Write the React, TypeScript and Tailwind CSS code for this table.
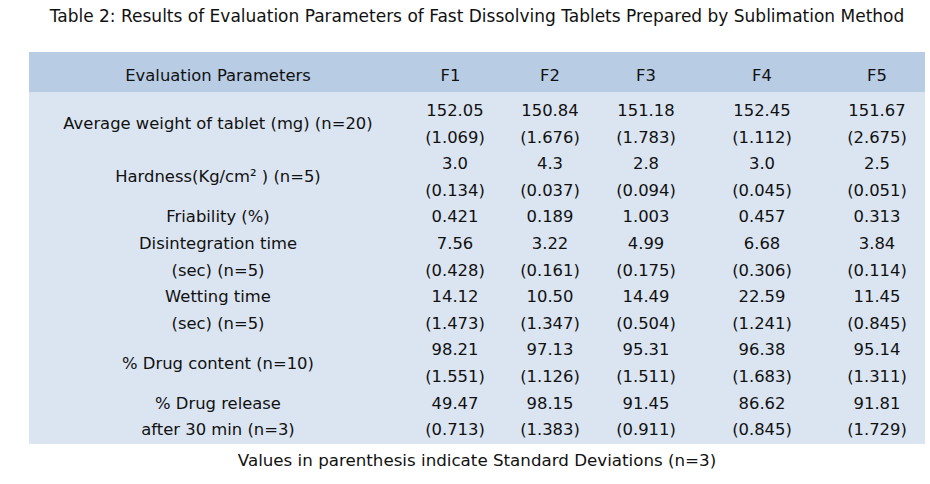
import React from "react";

type Row = { label: string[]; values: string[][] };

const cols = ["F1", "F2", "F3", "F4", "F5"];

const rows: Row[] = [
  {
    label: ["Average weight of tablet (mg) (n=20)"],
    values: [
      ["152.05", "(1.069)"],
      ["150.84", "(1.676)"],
      ["151.18", "(1.783)"],
      ["152.45", "(1.112)"],
      ["151.67", "(2.675)"],
    ],
  },
  {
    label: ["Hardness(Kg/cm\u00b2 ) (n=5)"],
    values: [
      ["3.0", "(0.134)"],
      ["4.3", "(0.037)"],
      ["2.8", "(0.094)"],
      ["3.0", "(0.045)"],
      ["2.5", "(0.051)"],
    ],
  },
  {
    label: ["Friability (%)"],
    values: [["0.421"], ["0.189"], ["1.003"], ["0.457"], ["0.313"]],
  },
  {
    label: ["Disintegration time", "(sec) (n=5)"],
    values: [
      ["7.56", "(0.428)"],
      ["3.22", "(0.161)"],
      ["4.99", "(0.175)"],
      ["6.68", "(0.306)"],
      ["3.84", "(0.114)"],
    ],
  },
  {
    label: ["Wetting time", "(sec) (n=5)"],
    values: [
      ["14.12", "(1.473)"],
      ["10.50", "(1.347)"],
      ["14.49", "(0.504)"],
      ["22.59", "(1.241)"],
      ["11.45", "(0.845)"],
    ],
  },
  {
    label: ["% Drug content (n=10)"],
    values: [
      ["98.21", "(1.551)"],
      ["97.13", "(1.126)"],
      ["95.31", "(1.511)"],
      ["96.38", "(1.683)"],
      ["95.14", "(1.311)"],
    ],
  },
  {
    label: ["% Drug release", "after 30 min (n=3)"],
    values: [
      ["49.47", "(0.713)"],
      ["98.15", "(1.383)"],
      ["91.45", "(0.911)"],
      ["86.62", "(0.845)"],
      ["91.81", "(1.729)"],
    ],
  },
];

const grid = "grid grid-cols-[378px_96px_94px_98px_134px_96px]";

export default function App() {
  return (
    <div className="min-h-[484px] w-[930px] bg-white pl-[29px] font-['DejaVu_Sans',sans-serif] text-[#111]">
      <div className="w-[896px] text-center">
        <div className="pt-[5px] text-[17px] leading-[22px]">
          Table 2: Results of Evaluation Parameters of Fast Dissolving Tablets Prepared by Sublimation Method
        </div>

        <div className="mt-[25px] text-[16.4px]">
          <div className={`${grid} h-[40px] items-center bg-[#b8cce4] pt-[8px]`}>
            <div>Evaluation Parameters</div>
            {cols.map((c, i) => (
              <div key={c} className={i === 0 ? "pr-[9px]" : ""}>
                {c}
              </div>
            ))}
          </div>

          <div className="bg-[#dbe5f1] pt-[6px] leading-[26.6px]">
            {rows.map((r, idx) => (
              <div key={idx} className={grid}>
                <div className="flex flex-col justify-center">
                  {r.label.map((l) => (
                    <div key={l}>{l}</div>
                  ))}
                </div>
                {r.values.map((v, j) => (
                  <div key={j} className="flex flex-col justify-center">
                    {v.map((x, k) => (
                      <div key={k}>{x}</div>
                    ))}
                  </div>
                ))}
              </div>
            ))}
          </div>
        </div>

        <div className="pt-[3px] text-[16.7px] leading-[27px]">
          Values in parenthesis indicate Standard Deviations (n=3)
        </div>
      </div>
    </div>
  );
}
